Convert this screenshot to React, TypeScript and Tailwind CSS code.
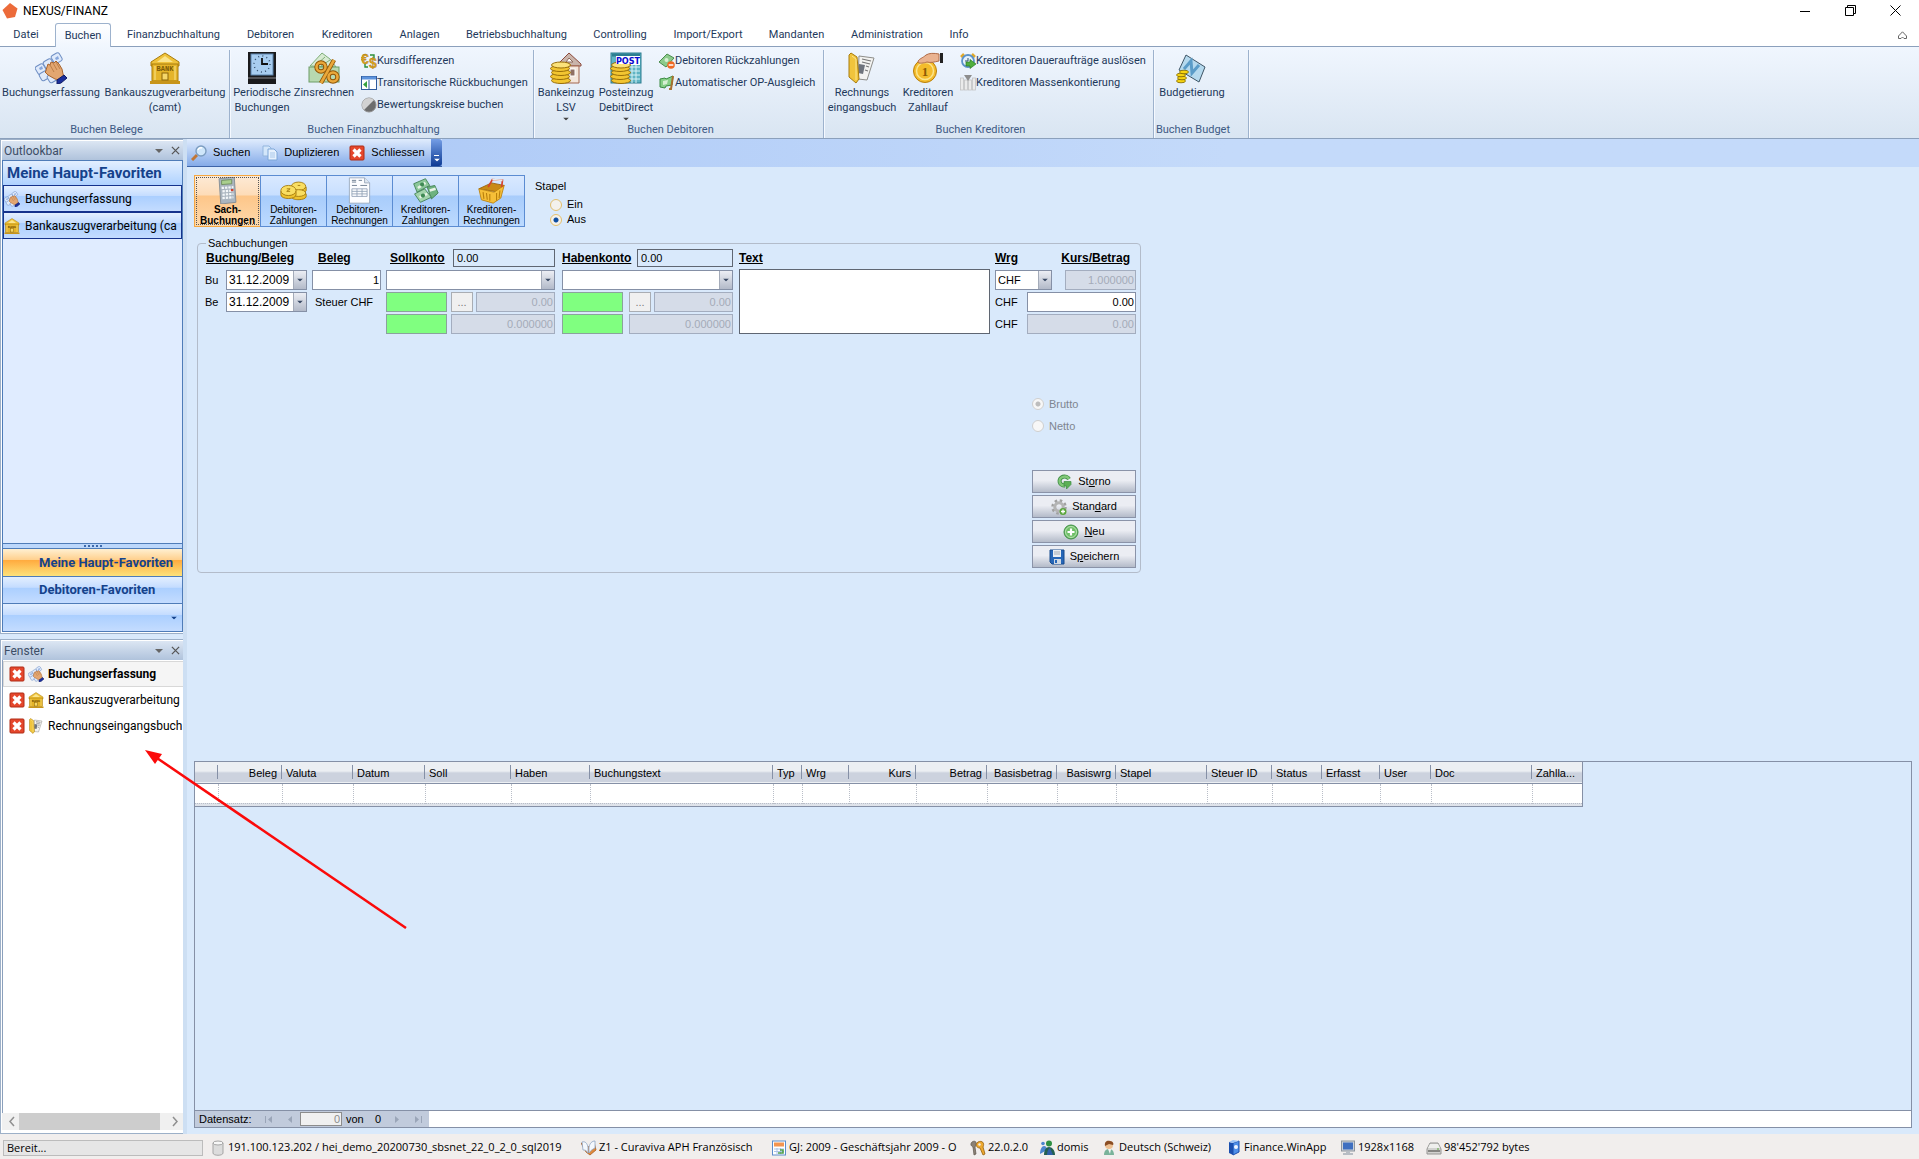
import type { ReactNode } from 'react'
import clsx from 'clsx'

const UI = "font-['Roboto','Noto_Sans',sans-serif]"
const FORM = "font-['Liberation_Sans',Arial,sans-serif]"

/* ---------- icons ---------- */

function Svg({ box = 32, size = 'size-8', children }: { box?: number; size?: string; children: ReactNode }) {
  return (
    <svg viewBox={`0 0 ${box} ${box}`} className={clsx('shrink-0', size)} aria-hidden="true" fill="none">
      {children}
    </svg>
  )
}

function HandIcon({ size }: { size?: string }) {
  return (
    <Svg size={size}>
      <g stroke="#6f8fc4" fill="#dfeafb">
        <rect x="1" y="13" width="9" height="9" rx="2" transform="rotate(-30 5 17)" />
        <rect x="9" y="8" width="9" height="9" rx="2" transform="rotate(-30 13 12)" />
        <rect x="17" y="2" width="9" height="9" rx="2" transform="rotate(-30 21 6)" />
        <rect x="5" y="20" width="9" height="8" rx="2" transform="rotate(-30 9 24)" />
        <rect x="13" y="22" width="9" height="8" rx="2" transform="rotate(-30 17 26)" />
      </g>
      <path d="M4 16l3-2 1 3-3 1zM20 6l3-2 1 3-3 1z" fill="#86a6dc" />
      <path d="M11 18l2-6 2 1 1-3 3 1 2-2 3 3 3 5 1 5 1 2-5 4-4-1-7-4-3-3 1-1z" fill="#e3a670" stroke="#a9652f" />
      <path d="M15 13l4 7M18 11l4 7M21 10l4 7" stroke="#b87a45" strokeWidth=".9" />
      <path d="M22 28l7-5 3 3-6 5-4 1z" fill="#1b2f9c" stroke="#101c66" />
    </Svg>
  )
}

function BankIcon({ size }: { size?: string }) {
  return (
    <Svg size={size}>
      <path d="M16 1l14 9v4H2v-4z" fill="#efc23a" stroke="#a97c0c" />
      <path d="M16 4l8 6H8z" fill="#fbe58c" />
      <rect x="3" y="12" width="26" height="17" fill="#e5b429" stroke="#a97c0c" />
      <rect x="1" y="29" width="30" height="3" fill="#c8951a" />
      <text x="16" y="19" textAnchor="middle" fontSize="7" fontWeight="bold" fill="#7c5a06" fontFamily="Liberation Mono, monospace">BANK</text>
      <rect x="13" y="21" width="6" height="7" fill="#f6d76a" stroke="#8b6508" />
      <path d="M6 14v14M26 14v14" stroke="#fbe58c" />
    </Svg>
  )
}

function ClockIcon() {
  return (
    <Svg>
      <rect x="2" width="28" height="32" fill="#1a1a1c" />
      <rect x="5" y="2" width="22" height="21" fill="#a8cdf0" stroke="#5d84ad" />
      <circle cx="16" cy="12" r="8" stroke="#37526f" strokeWidth="1.5" strokeDasharray="1 3.2" />
      <path d="M16 6v6h6" stroke="#111" strokeWidth="1.8" />
      <path d="M2 26h28" stroke="#8a8a8e" />
    </Svg>
  )
}

function PercentIcon() {
  return (
    <Svg>
      <path d="M2 14L14 1l8 6 6 8z" fill="#d7ead2" stroke="#7fae79" />
      <path d="M8 13l9-8M13 14l9-6" stroke="#7fae79" />
      <rect x="1" y="15" width="30" height="15" fill="#b7d9b0" stroke="#6d9c66" />
      <g stroke="#8e5406" strokeWidth="4.4">
        <circle cx="13" cy="15" r="4.5" />
        <circle cx="25" cy="25" r="4.5" />
        <path d="M26 8L13 31" />
      </g>
      <g stroke="#eaa83a" strokeWidth="2.6">
        <circle cx="13" cy="15" r="4.5" />
        <circle cx="25" cy="25" r="4.5" />
        <path d="M26 8L13 31" />
      </g>
    </Svg>
  )
}

function Coins() {
  return (
    <g fill="#f2c531" stroke="#9a6f08">
      <ellipse cx="11" cy="28.500" rx="9.500" ry="3" />
      <ellipse cx="10" cy="24.500" rx="9.500" ry="3" />
      <ellipse cx="11" cy="20.500" rx="9.500" ry="3" />
      <ellipse cx="10" cy="16.500" rx="9.500" ry="3" />
      <ellipse cx="11" cy="13" rx="9.500" ry="3" fill="#fbe27a" />
    </g>
  )
}

function HouseCoinsIcon() {
  return (
    <Svg>
      <path d="M8 12L19 1l12 11v2H8z" fill="#c9b4ab" stroke="#8d4a3c" />
      <path d="M10 14h19v17H10z" fill="#f3e6dc" stroke="#a3674f" />
      <path d="M16 10l3-4 4 4z" fill="#fff" stroke="#8d6a5c" />
      <rect x="20" y="17" width="5" height="7" fill="#8f6f63" stroke="#fff" />
      <Coins />
    </Svg>
  )
}

function PostIcon() {
  return (
    <Svg>
      <rect x="1" y="1" width="30" height="30" fill="#5fb4c4" stroke="#2c7d90" />
      <path d="M2 3h28" stroke="#2c7d90" strokeWidth="3" />
      <path d="M14 15h16M14 19h16M14 23h16M14 27h16M18 13v18M22 13v18M26 13v18" stroke="#d7f1f5" />
      <rect x="6" y="4" width="24" height="9" fill="#fff" />
      <Coins />
      <rect x="6" y="4" width="24" height="8" fill="#fff" />
      <text x="18" y="12" textAnchor="middle" fontSize="9" fontWeight="bold" fill="#0a0ad0" fontFamily="DejaVu Sans Condensed, sans-serif">POST</text>
    </Svg>
  )
}

function FolderIcon({ size }: { size?: string }) {
  return (
    <Svg size={size}>
      <path d="M13 4l15 2-7 22-9-1z" fill="#f3f3f1" stroke="#8e8e8a" />
      <path d="M16 7l9 2M16 10l8 2M20 14l3 1M19 18l3 1" stroke="#777" strokeWidth="1.2" />
      <path d="M13 12l6 1-2 9-5-1z" fill="#6f747d" />
      <path d="M3 3l2-2 6 4 2 22-3 4-7-6z" fill="#f0c43c" stroke="#a97c0c" />
      <path d="M6 4l4 3v21" stroke="#fbe58c" />
    </Svg>
  )
}

function PayCoinIcon() {
  return (
    <Svg>
      <circle cx="13" cy="19" r="11.500" fill="#f4bc2c" stroke="#b97f0b" />
      <circle cx="13" cy="19" r="8.500" stroke="#fbe58c" strokeWidth="1.500" />
      <text x="13" y="24" textAnchor="middle" fontSize="13" fontWeight="bold" fill="#8b5a04" fontFamily="Liberation Serif, serif">1</text>
      <path d="M6 10c0-3 5-4 8-7 3-2 8-2 13-1v7c-5 1-8 2-12 1-3 1-8 2-9 0z" fill="#eab391" stroke="#b06c48" />
      <rect x="28" y="1" width="3" height="10" fill="#222" />
    </Svg>
  )
}

function BudgetIcon() {
  return (
    <Svg>
      <path d="M10 3l19 12-6 15L3 18z" fill="#b5d9ee" stroke="#3e5566" />
      <path d="M8 17l7-8 1 12 7-8" stroke="#5b9cc8" strokeWidth="3" />
      <g fill="#f6d311" stroke="#7b6500" strokeWidth=".8">
        <ellipse cx="5" cy="29" rx="4.500" ry="1.800" />
        <ellipse cx="6" cy="26" rx="4.500" ry="1.800" />
        <ellipse cx="5" cy="23" rx="4.500" ry="1.800" />
        <ellipse cx="8" cy="20" rx="4.500" ry="1.800" />
      </g>
    </Svg>
  )
}

function S({ children }: { children: ReactNode }) {
  return <Svg box={16} size="size-4">{children}</Svg>
}

const CurrencyIcon = () => (
  <S>
    <text x="0" y="11" fontSize="14" fontWeight="bold" fill="#dba21c" stroke="#9a6f08" strokeWidth=".3" fontFamily="Liberation Sans, sans-serif">€</text>
    <text x="8" y="15" fontSize="14" fontWeight="bold" fill="#dba21c" stroke="#9a6f08" strokeWidth=".3" fontFamily="Liberation Sans, sans-serif">$</text>
    <path d="M9 2h4v3M7 14H4v-3" stroke="#2d8f3a" strokeWidth="1.400" />
  </S>
)
const TransitIcon = () => (
  <S>
    <rect x=".5" y="1.500" width="15" height="13" fill="#fff" stroke="#2f5b9c" />
    <path d="M1 3h14" stroke="#5c93dd" strokeWidth="3" />
    <path d="M8 5v10" stroke="#2f5b9c" />
    <path d="M6 6v7L2 9.500z" fill="#37a03f" />
  </S>
)
const SphereIcon = () => (
  <S>
    <circle cx="8" cy="8" r="7" fill="#6d6d6d" stroke="#8f8f8f" />
    <path d="M13 3L3 13A7 7 0 0 1 13 3z" fill="#d2d2d2" />
  </S>
)
const RefundIcon = () => (
  <S>
    <path d="M0 9l8-8 7 4-8 9z" fill="#8ccb8b" stroke="#4b8d4d" />
    <circle cx="7.500" cy="7" r="2" fill="#d6efd2" />
    <circle cx="12" cy="12" r="3.800" fill="#ef6a25" />
    <path d="M9.700 12h4.600" stroke="#fff" strokeWidth="1.500" />
  </S>
)
const BalanceIcon = () => (
  <S>
    <path d="M1 4l5-1 1 1 7-3-1 9-6 1-1 2-5-1z" fill="#86cf86" stroke="#3b8a42" />
    <path d="M14 1l-2 13h-2" stroke="#a8702e" strokeWidth="2" />
    <path d="M4 6l5-1-1 4-4 1z" fill="#d6efd2" />
  </S>
)
const AlarmIcon = () => (
  <S>
    <path d="M1 4l3-3M15 4l-3-3" stroke="#e0a92c" strokeWidth="2.500" />
    <circle cx="8" cy="8" r="6" fill="#e4f0fb" stroke="#5b92c9" strokeWidth="1.800" />
    <path d="M8 5v3H5" stroke="#33536f" />
    <path d="M6 9h4V6.500l6 4.500-6 4.500V13H6z" fill="#4fae3d" stroke="#2d7d22" strokeWidth=".7" />
  </S>
)
const ColumnsIcon = () => (
  <S>
    <g fill="#ebebeb" stroke="#c2c2c2" strokeWidth=".8">
      <rect x="0.500" y="3" width="3" height="12" />
      <rect x="4.500" y="5" width="3" height="10" />
      <rect x="8.500" y="5" width="3" height="10" />
      <rect x="12.500" y="3" width="3" height="12" />
    </g>
    <path d="M4 0h8L8 6z" fill="#8d8d8d" />
  </S>
)
const SearchIcon = () => (
  <S>
    <path d="M1 15l5-5" stroke="#c07636" strokeWidth="3" />
    <circle cx="10" cy="6" r="5" fill="#cfe6fa" stroke="#7c9dc0" strokeWidth="1.400" />
    <path d="M7 5a3 3 0 0 1 4-2" stroke="#fff" strokeWidth="1.400" />
  </S>
)
const CopyIcon = () => (
  <S>
    <path d="M1 1h6l2 2v8H1z" fill="#d3e6fa" stroke="#93b5dd" />
    <path d="M6 4h6l3 3v8H6z" fill="#e6f1fd" stroke="#7da6d8" />
    <path d="M8 8h5M8 10h5M8 12h5" stroke="#a9c8ea" />
  </S>
)
const CloseRedIcon = () => (
  <S>
    <rect x="1" y="1" width="14" height="14" rx="1" fill="#e5472c" stroke="#b02c16" />
    <path d="M4.500 4.500l7 7M11.500 4.500l-7 7" stroke="#fff" strokeWidth="3.200" />
  </S>
)
const UndoIcon = () => (
  <S>
    <path d="M12 5A5 4.500 0 1 0 8 11.500" stroke="#3c8c42" strokeWidth="4" />
    <path d="M12 5A5 4.500 0 1 0 8 11.500" stroke="#82c878" strokeWidth="2.400" />
    <path d="M7 7.500h7v3L9.500 15v-3H7z" fill="#5cb055" stroke="#3c8c42" strokeWidth=".7" />
  </S>
)
const GearIcon = () => (
  <S>
    <circle cx="8" cy="8" r="6.500" stroke="#a0a0a0" strokeWidth="2.500" strokeDasharray="2.500 2.600" />
    <circle cx="8" cy="8" r="4.200" stroke="#b4b4b4" strokeWidth="3" />
    <circle cx="12" cy="12.500" r="3.500" fill="#5aa63c" />
    <path d="M12 10.500v4M10 12.500h4" stroke="#fff" strokeWidth="1.300" />
  </S>
)
const PlusIcon = () => (
  <S>
    <circle cx="8" cy="8" r="7" fill="#6fbf68" stroke="#3f8f45" />
    <circle cx="8" cy="8" r="5.500" stroke="#b9e3b2" />
    <path d="M8 4.500v7M4.500 8h7" stroke="#fff" strokeWidth="2.200" />
  </S>
)
const SaveIcon = () => (
  <S>
    <path d="M1 1h14v14H3l-2-2z" fill="#2667b8" stroke="#174a8c" />
    <rect x="4" y="1" width="8" height="7" fill="#e9eef3" />
    <path d="M5 3h6M5 5h6" stroke="#a3abb5" />
    <rect x="5" y="10" width="7" height="5" fill="#cfd8e2" />
    <rect x="6" y="11" width="2" height="3" fill="#2667b8" />
  </S>
)
const DbIcon = () => (
  <S>
    <path d="M3 3v10c0 3 10 3 10 0V3z" fill="#dcdcdc" stroke="#a5a5a5" />
    <ellipse cx="8" cy="3" rx="5" ry="2" fill="#f7f7f7" stroke="#a5a5a5" />
  </S>
)
const BookIcon = () => (
  <S>
    <path d="M0 3l5 9 4 3 6-5-2-8-5 5z" fill="#e08a3c" stroke="#a85e22" strokeWidth=".8" />
    <path d="M1 2c3-1 5 1 6 5v6c-2-3-3-3-5-3zM14 1c-3 0-5 2-6 6v6c2-3 4-4 6-5z" fill="#f4f8fd" stroke="#8da3c4" strokeWidth=".8" />
  </S>
)
const CalendarIcon = () => (
  <S>
    <rect x="1.500" y="1" width="13" height="14" fill="#fff" stroke="#5b8ccc" />
    <rect x="3" y="2.500" width="10" height="4" fill="#f39450" />
    <path d="M3 9h10M3 11.500h10M6 8v6M9.500 8v6" stroke="#a9c3e6" />
    <path d="M9 10h3v3H7" stroke="#4fa04b" strokeWidth="1.600" />
  </S>
)
const KeyIcon = () => (
  <S>
    <path d="M2 2c3-2 5 0 4 3L5 7l1 7-2 1-1-8C1 6 0 4 2 2z" fill="#8b8176" stroke="#5c544b" strokeWidth=".7" />
    <path d="M8 2c4-2 7 1 5 5l2 7-2 1-3-7C6 8 5 4 8 2z" fill="#eea92f" stroke="#96600c" strokeWidth=".8" />
    <circle cx="9.500" cy="4.500" r="1.200" fill="#f1eeed" />
  </S>
)
const UsersIcon = () => (
  <S>
    <circle cx="4" cy="3.500" r="1.800" fill="#4c86cf" />
    <path d="M1 14c0-5 2-8 4-8s3 2 3 4z" fill="#4c86cf" />
    <circle cx="10" cy="3.500" r="3" fill="#2f8f43" />
    <path d="M5 15c0-5 2-8 5-8s6 3 6 8z" fill="#24614f" />
    <path d="M8 15c0-3 1-6 3-7l3 7z" fill="#2e5fa8" />
  </S>
)
const PersonIcon = () => (
  <S>
    <circle cx="8" cy="5" r="4" fill="#edbf91" />
    <path d="M4 6C3 1 7 0 9 1c3 0 4 3 3 4L8 4z" fill="#8a4d24" />
    <path d="M3 15c0-4 2-6 5-6s5 2 5 6z" fill="#79b39a" />
    <path d="M7 9h3l-1 5z" fill="#f6f6f6" />
  </S>
)
const AppIcon = () => (
  <S>
    <path d="M3 2l4 1v12l-4-2z" fill="#1b4fae" />
    <path d="M7 3l6-2v11l-6 3z" fill="#4f8fe8" stroke="#1b4fae" />
    <circle cx="10" cy="7" r="2" fill="#f0f6ff" />
    <path d="M3 2l4-2 6 1-6 2z" fill="#9cc3f6" />
  </S>
)
const MonitorIcon = () => (
  <S>
    <rect x="1.500" y="1" width="13" height="10" fill="#ccd2d9" stroke="#8d959e" />
    <rect x="3" y="2.500" width="10" height="7" fill="#3f6fc0" />
    <path d="M6 11h4v2h3v2H3v-2h3z" fill="#b7bdc4" />
  </S>
)
const PrinterIcon = () => (
  <S>
    <path d="M4 3h8l3 6v5H1V9z" fill="#d2d2d0" stroke="#959593" />
    <path d="M4 4h8l2 4H2z" fill="#efefed" />
    <path d="M2 11h12" stroke="#6c6c6a" strokeWidth="1.500" />
    <path d="M11 9h2" stroke="#5aa63c" />
  </S>
)

function CalculatorIcon() {
  return (
    <Svg>
      <path d="M6 2l18-2 2 30-18 2z" fill="#aab5bf" stroke="#7c8791" />
      <path d="M9 4l12-1v5L9 9z" fill="#a9cf8d" stroke="#6c8a59" />
      <g stroke="#f4f7f9" strokeWidth="2.600" strokeDasharray="2.800 1.200">
        <path d="M9 13l14-1M10 17l13-1M10 21l13-1M10 25l13-1" />
      </g>
      <path d="M20 15.500h3" stroke="#d2412e" strokeWidth="2.500" />
    </Svg>
  )
}
function GoldIcon() {
  return (
    <Svg>
      <g fill="#eec22e" stroke="#9f7409">
        <path d="M14 12v4c0 4 17 4 17 0v-4z" />
        <ellipse cx="22" cy="11" rx="8.500" ry="5" fill="#f9de62" />
        <path d="M14 21v3c0 4 17 4 17-1v-3z" />
        <ellipse cx="22" cy="19" rx="8.500" ry="4" fill="#f9de62" />
        <path d="M1 17v4c0 6 18 6 18 0v-4z" />
        <ellipse cx="10" cy="16" rx="9" ry="6" fill="#f9de62" />
      </g>
      <path d="M8 14h4l-4 3h4M21 10h3" stroke="#9f7409" />
    </Svg>
  )
}
function InvoiceIcon() {
  return (
    <Svg>
      <path d="M4 1h18l6 6v24H4z" fill="#fcfdff" stroke="#94a4b8" />
      <path d="M22 1v6h6" fill="#dfe7f0" stroke="#94a4b8" />
      <path d="M7 4h5M7 6h5M15 4h4M7 10h6M17 10h8" stroke="#5f7186" />
      <path d="M7 14h18v9H7zM7 17h18M7 20h18M13 14v9M19 14v9" stroke="#8fa0b5" />
    </Svg>
  )
}
function CashIcon() {
  return (
    <Svg>
      <path d="M2 8l14-6 5 8L6 18z" fill="#8cc79a" stroke="#3b7d4d" />
      <path d="M18 12l9-2 4 9-8 7z" fill="#6eb27f" stroke="#3b7d4d" />
      <path d="M3 20l12-6 8 10-13 6z" fill="#a3d4ac" stroke="#3b7d4d" />
      <path d="M7 13l9-6M9 24l9-4M21 16l7-2" stroke="#e8f3e6" strokeWidth="3" />
      <circle cx="12" cy="9" r="2.500" fill="#3f8a54" />
      <circle cx="13" cy="22" r="2.500" fill="#3f8a54" />
    </Svg>
  )
}
function BasketIcon() {
  return (
    <Svg>
      <path d="M1 14l15-7 15 3-6 8z" fill="#c98a14" stroke="#96600c" />
      <path d="M1 14l18 4 12-8-4 15-9 6-14-4z" fill="#f6bf38" stroke="#b97f0b" />
      <path d="M6 18l1 8M10 19l1 8M14 20v8M22 19v9M26 16l-1 9" stroke="#b97f0b" strokeWidth="1.300" />
      <path d="M12 12l5-9 12 1-1 8" stroke="#d5442c" strokeWidth="2" />
      <path d="M17 3l12 1" stroke="#e8e8e8" strokeWidth="2" />
    </Svg>
  )
}

function Caret({ className }: { className?: string }) {
  return (
    <svg viewBox="0 0 8 4" className={clsx('h-1 w-2 shrink-0', className)} aria-hidden="true">
      <path d="M0 0h8L4 4z" fill="currentColor" />
    </svg>
  )
}

/* ---------- ribbon ---------- */

const menus = [
  ['Datei', 'w-[52px]'],
  ['Buchen', 'w-[62px]'],
  ['Finanzbuchhaltung', 'w-[119px]'],
  ['Debitoren', 'w-[75px]'],
  ['Kreditoren', 'w-[78px]'],
  ['Anlagen', 'w-[67px]'],
  ['Betriebsbuchhaltung', 'w-[127px]'],
  ['Controlling', 'w-[80px]'],
  ['Import/Export', 'w-[96px]'],
  ['Mandanten', 'w-[81px]'],
  ['Administration', 'w-[100px]'],
  ['Info', 'w-[44px]'],
]

function BigButton({ icon, lines, width, drop }: { icon: ReactNode; lines: string[]; width: string; drop?: boolean }) {
  return (
    <button type="button" className={clsx('flex shrink-0 flex-col items-center pt-0.5 whitespace-nowrap', width)}>
      {icon}
      {lines.map(l => <span key={l} className="leading-[15px] first-of-type:mt-px">{l}</span>)}
      {drop && <Caret className="mt-0.5 scale-75 text-[#444]" />}
    </button>
  )
}

function SmallButton({ icon, label }: { icon: ReactNode; label: string }) {
  return (
    <button type="button" className="flex h-[22px] items-center whitespace-nowrap">
      {icon}
      {label}
    </button>
  )
}

function RibbonGroup({ label, width, children }: { label: string; width: string; children: ReactNode }) {
  return (
    <section className={clsx('flex shrink-0 flex-col border-r border-[#9db2cd] shadow-[1px_0_0_#f5f9ff]', width)}>
      <div className="flex flex-1 items-start">{children}</div>
      <h2 className="h-4 pr-4 text-center leading-4 whitespace-nowrap text-[#3e5a84]">{label}</h2>
    </section>
  )
}

function Ribbon() {
  return (
    <div className="flex h-[92px] border-b border-[#8ba0bc] bg-linear-to-b from-[#f0f6fe] to-[#d9e5f2] pt-[3px] text-[11px] text-[#1e395b]">
      <RibbonGroup label="Buchen Belege" width="w-[230px]">
        <BigButton icon={<HandIcon />} lines={['Buchungserfassung']} width="w-[102px]" />
        <BigButton icon={<BankIcon />} lines={['Bankauszugverarbeitung', '(camt)']} width="w-[126px]" />
      </RibbonGroup>
      <RibbonGroup label="Buchen Finanzbuchhaltung" width="w-[304px]">
        <BigButton icon={<ClockIcon />} lines={['Periodische', 'Buchungen']} width="w-[64px]" />
        <BigButton icon={<PercentIcon />} lines={['Zinsrechnen']} width="w-[60px]" />
        <div className="flex flex-col pl-[7px]">
          <SmallButton icon={<CurrencyIcon />} label="Kursdifferenzen" />
          <SmallButton icon={<TransitIcon />} label="Transitorische Rückbuchungen" />
          <SmallButton icon={<SphereIcon />} label="Bewertungskreise buchen" />
        </div>
      </RibbonGroup>
      <RibbonGroup label="Buchen Debitoren" width="w-[290px]">
        <BigButton icon={<HouseCoinsIcon />} lines={['Bankeinzug', 'LSV']} width="w-[64px]" drop />
        <BigButton icon={<PostIcon />} lines={['Posteinzug', 'DebitDirect']} width="w-[56px]" drop />
        <div className="flex flex-col pl-[5px]">
          <SmallButton icon={<RefundIcon />} label="Debitoren Rückzahlungen" />
          <SmallButton icon={<BalanceIcon />} label="Automatischer OP-Ausgleich" />
        </div>
      </RibbonGroup>
      <RibbonGroup label="Buchen Kreditoren" width="w-[330px]">
        <BigButton icon={<FolderIcon />} lines={['Rechnungs', 'eingangsbuch']} width="w-[76px]" />
        <BigButton icon={<PayCoinIcon />} lines={['Kreditoren', 'Zahllauf']} width="w-[56px]" />
        <div className="flex flex-col pl-1">
          <SmallButton icon={<AlarmIcon />} label="Kreditoren Daueraufträge auslösen" />
          <SmallButton icon={<ColumnsIcon />} label="Kreditoren Massenkontierung" />
        </div>
      </RibbonGroup>
      <RibbonGroup label="Buchen Budget" width="w-[95px]">
        <BigButton icon={<BudgetIcon />} lines={['Budgetierung']} width="w-[76px]" />
      </RibbonGroup>
    </div>
  )
}

/* ---------- side bar ---------- */

function PanelHeader({ title }: { title: string }) {
  return (
    <div className="flex h-[19px] shrink-0 items-center bg-linear-to-b from-[#dce6f3] to-[#b0c3dc] pl-0.5 text-xs text-[#3d4e66]">
      <h2 className="flex-1">{title}</h2>
      <button type="button" aria-label="Menü" className="mr-2 text-[#666]"><Caret /></button>
      <button type="button" aria-label="Schliessen" className="mr-[3px] text-[#555]">
        <svg viewBox="0 0 10 10" className="size-[9px]"><path d="M1 1l8 8M9 1l-8 8" stroke="currentColor" strokeWidth="1.400" /></svg>
      </button>
    </div>
  )
}

const windows = [
  { label: 'Buchungserfassung', icon: <HandIcon size="size-4" />, active: true },
  { label: 'Bankauszugverarbeitung', icon: <BankIcon size="size-4" /> },
  { label: 'Rechnungseingangsbuch', icon: <FolderIcon size="size-4" /> },
]

const BLUE_BTN = 'bg-[linear-gradient(#e3efff,#c4dcff_40%,#abcfff_42%,#c4dcff)]'

function Sidebar() {
  return (
    <aside className="flex w-[183px] shrink-0 flex-col gap-[5px] text-xs">
      <div className="flex h-[495px] flex-col border border-r-0 border-[#9db0c8] bg-white p-px pr-0">
        <PanelHeader title="Outlookbar" />
        <div className="flex flex-1 flex-col border border-[#4f7cb8] bg-[#e0ecff]">
          <h3 className="h-6 bg-linear-to-b from-[#e3efff] to-[#afd2ff] pl-1 text-[15px] leading-6 font-bold text-[#15428b]">Meine Haupt-Favoriten</h3>
          <button type="button" className={clsx('flex h-[27px] items-center gap-[5px] overflow-hidden border border-[#16338c] whitespace-nowrap', BLUE_BTN)}>
            <HandIcon size="size-4" />Buchungserfassung
          </button>
          <button type="button" className={clsx('flex h-[27px] items-center gap-[5px] border border-[#16338c] pr-1 whitespace-nowrap', BLUE_BTN)}>
            <BankIcon size="size-4" /><span className="overflow-hidden">Bankauszugverarbeitung (camt)</span>
          </button>
          <div className="flex-1" />
          <div className="flex h-[6px] items-center justify-center gap-0.5 border-y border-[#4f7cb8] bg-[#bcd7fb]">
            {[0, 1, 2, 3, 4].map(i => <span key={i} className="size-0.5 bg-[#3d69ab]" />)}
          </div>
          <button type="button" className="h-[27px] bg-[linear-gradient(#fff0d2,#ffd08d_40%,#ffab3f_42%,#fee27a)] pl-9 text-left text-[13px] font-bold whitespace-nowrap text-[#15428b]">Meine Haupt-Favoriten</button>
          <button type="button" className={clsx('h-7 border-y border-[#4f7cb8] pl-9 text-left text-[13px] font-bold text-[#15428b]', BLUE_BTN)}>Debitoren-Favoriten</button>
          <button type="button" aria-label="Weitere Favoriten" className={clsx('flex h-[27px] items-center justify-end pr-1 text-[#15428b]', BLUE_BTN)}><Caret className="scale-75" /></button>
        </div>
      </div>
      <div className="flex flex-1 flex-col border border-r-0 border-[#9db0c8] bg-white p-px pr-0">
        <PanelHeader title="Fenster" />
        <ul className="flex-1 border-l border-[#8ba0bc] pt-px text-black">
          {windows.map(w => (
            <li
              key={w.label}
              className={clsx(
                'flex h-[26px] items-center border pl-[5px] whitespace-nowrap',
                w.active ? 'border-r-0 border-[#d8d8d8] bg-[#f5f5f5] font-bold' : 'border-transparent',
              )}
            >
              <button type="button" aria-label={`${w.label} schliessen`}><CloseRedIcon /></button>
              <a href="#" className="flex items-center gap-1 pl-[3px]">{w.icon}{w.label}</a>
            </li>
          ))}
        </ul>
        <div className="mb-0.5 flex h-[17px] items-center bg-[#f0f0f0] text-[#8f8f8f]">
          <svg viewBox="0 0 17 17" className="size-[17px]" fill="none"><path d="M12 4L8 8.500l4 4.500" stroke="currentColor" strokeWidth="1.500" /></svg>
          <div className="h-full flex-1 bg-[#cdcdcd]" />
          <svg viewBox="0 0 23 17" className="h-[17px] w-[23px]" fill="none"><path d="M13 4l4 4.500-4 4.500" stroke="currentColor" strokeWidth="1.500" /></svg>
        </div>
      </div>
    </aside>
  )
}

/* ---------- booking form ---------- */

function Drop() {
  return (
    <span className="flex w-[13px] shrink-0 items-center justify-center border-l border-[#a4abb9] bg-linear-to-b from-[#eceef4] to-[#b3bac9] text-[#3a4a66]">
      <Caret className="scale-75" />
    </span>
  )
}

function Combo({ label, width, options = [''] }: { label: string; width: string; options?: string[] }) {
  return (
    <div className={clsx('flex h-5 border border-[#8590a6] bg-white', width)}>
      <select aria-label={label} className="min-w-0 flex-1 appearance-none bg-transparent px-0.5 outline-none">
        {options.map(o => <option key={o}>{o}</option>)}
      </select>
      <Drop />
    </div>
  )
}

function DateBox({ label }: { label: string }) {
  return (
    <label className="flex h-5 items-center">
      <span className="w-[21px]">{label}</span>
      <span className="flex h-5 w-[81px] border border-[#8590a6] bg-white">
        <input defaultValue="31.12.2009" className="min-w-0 flex-1 pl-0.5 text-xs outline-none" />
        <Drop />
      </span>
    </label>
  )
}

function NumBox({ label, value, width, disabled }: { label: string; value: string; width: string; disabled?: boolean }) {
  return (
    <input
      aria-label={label}
      defaultValue={value}
      disabled={disabled}
      className={clsx(
        'h-5 border px-px text-right',
        disabled ? 'border-[#a3adbf] bg-[#d5dce8] text-[#a4abb8]' : 'border-[#8590a6] bg-white text-black',
        width,
      )}
    />
  )
}

function Green({ label }: { label: string }) {
  return <input aria-label={label} className="h-5 w-[61px] border border-[#8aa39c] bg-[#80ff80] px-1" />
}

function Head({ children }: { children: ReactNode }) {
  return <span className="text-xs leading-[17px] font-bold underline">{children}</span>
}

function Konto({ name, width, saldo, indent }: { name: string; width: string; saldo: string; indent?: string }) {
  return (
    <div className={clsx('flex flex-col gap-0.5', width)}>
      <div className={clsx('mb-px flex h-[18px] items-end justify-between', indent)}>
        <Head>{name}</Head>
        <input aria-label={`${name} Saldo`} readOnly defaultValue="0.00" className={clsx('h-[18px] border border-[#5f6672] bg-transparent px-[3px]', saldo)} />
      </div>
      <Combo label={name} width="w-full" />
      <div className="flex justify-between">
        <Green label={`${name} Steuer`} />
        <div className="flex gap-[3px]">
          <button type="button" disabled className="h-5 w-[22px] border border-[#a9adb3] bg-[#f0f0f0] leading-4 text-[#7c7c7c]">...</button>
          <NumBox label={`${name} Steuerbetrag`} value="0.00" width="w-[79px]" disabled />
        </div>
      </div>
      <div className="flex justify-between">
        <Green label={`${name} Satz`} />
        <NumBox label={`${name} Kurs`} value="0.000000" width="w-[104px]" disabled />
      </div>
    </div>
  )
}

function Radio({ name, label, checked, disabled }: { name: string; label: string; checked?: boolean; disabled?: boolean }) {
  return (
    <label className={clsx('flex items-center gap-[5px]', disabled && 'text-[#7e8590]')}>
      <input
        type="radio"
        name={name}
        defaultChecked={checked}
        disabled={disabled}
        className="size-3 appearance-none rounded-full border border-[#e2be6c] bg-[#f3f1ec] checked:bg-[radial-gradient(circle,#0c4da2_0_2px,#f3f1ec_3px)] disabled:border-[#cfcfcf] disabled:bg-[#f7f7f7] disabled:checked:bg-[radial-gradient(circle,#bdbdbd_0_2px,#f7f7f7_3px)]"
      />
      {label}
    </label>
  )
}

function Action({ icon, children }: { icon: ReactNode; children: ReactNode }) {
  return (
    <button type="button" className="flex h-[23px] w-[104px] items-center justify-center gap-[5px] border border-[#8a93a8] bg-[linear-gradient(#ebedf3,#ebedf3_45%,#b4bbc9)] text-black">
      {icon}
      <span>{children}</span>
    </button>
  )
}

const modes = [
  { icon: <CalculatorIcon />, lines: ['Sach-', 'Buchungen'], active: true },
  { icon: <GoldIcon />, lines: ['Debitoren-', 'Zahlungen'] },
  { icon: <InvoiceIcon />, lines: ['Debitoren-', 'Rechnungen'] },
  { icon: <CashIcon />, lines: ['Kreditoren-', 'Zahlungen'] },
  { icon: <BasketIcon />, lines: ['Kreditoren-', 'Rechnungen'] },
]

function BookingForm() {
  return (
    <fieldset className="mt-2.5 ml-[10px] w-fit rounded-[4px] border border-[#b3bcca] pr-1 pb-1 pl-[7px] text-[11px] text-black">
      <legend className="ml-px px-0.5 leading-3">Sachbuchungen</legend>
      <div className="flex items-start">
        <div className="flex w-[107px] flex-col gap-0.5">
          <div className="mb-px flex h-[18px] items-end pl-px"><Head>Buchung/Beleg</Head></div>
          <DateBox label="Bu" />
          <DateBox label="Be" />
        </div>
        <div className="flex w-[74px] flex-col gap-0.5">
          <div className="mb-px flex h-[18px] items-end pl-1.5"><Head>Beleg</Head></div>
          <NumBox label="Beleg" value="1" width="w-[69px]" />
          <span className="pl-[3px] leading-5 whitespace-nowrap">Steuer CHF</span>
        </div>
        <Konto name="Sollkonto" width="w-[169px]" saldo="w-[102px]" indent="pl-1" />
        <div className="w-[7px]" />
        <Konto name="Habenkonto" width="w-[171px]" saldo="w-[96px]" />
        <label className="ml-1.5 flex w-[256px] flex-col">
          <span className="mb-[2px] flex h-[18px] items-end"><Head>Text</Head></span>
          <textarea className="h-[65px] w-[251px] resize-none border border-[#5f6672] bg-white p-1" />
        </label>
        <div className="flex w-[141px] flex-col gap-0.5">
          <div className="mb-px flex h-[18px] items-end justify-between pr-1.5">
            <Head>Wrg</Head>
            <Head>Kurs/Betrag</Head>
          </div>
          <div className="flex justify-between">
            <Combo label="Währung" width="w-[57px]" options={['CHF', 'EUR', 'USD']} />
            <NumBox label="Kurs" value="1.000000" width="w-[71px]" disabled />
          </div>
          <div className="flex items-center justify-between">CHF<NumBox label="Betrag" value="0.00" width="w-[109px]" /></div>
          <div className="flex items-center justify-between">CHF<NumBox label="Basisbetrag" value="0.00" width="w-[109px]" disabled /></div>
        </div>
      </div>
      <div className="mt-[62px] ml-auto flex w-[104px] flex-col gap-0.5">
        <div className="mb-[34px] flex flex-col gap-[5px]">
          <Radio name="steuer" label="Brutto" checked disabled />
          <Radio name="steuer" label="Netto" disabled />
        </div>
        <Action icon={<UndoIcon />}>St<u>o</u>rno</Action>
        <Action icon={<GearIcon />}>Stan<u>d</u>ard</Action>
        <Action icon={<PlusIcon />}><u>N</u>eu</Action>
        <Action icon={<SaveIcon />}>S<u>p</u>eichern</Action>
      </div>
    </fieldset>
  )
}

/* ---------- bookings grid ---------- */

const columns = [
  { label: '', width: 'w-[23px]' },
  { label: 'Beleg', width: 'w-[64px]', right: true },
  { label: 'Valuta', width: 'w-[71px]' },
  { label: 'Datum', width: 'w-[72px]' },
  { label: 'Soll', width: 'w-[86px]' },
  { label: 'Haben', width: 'w-[79px]' },
  { label: 'Buchungstext', width: 'w-[183px]' },
  { label: 'Typ', width: 'w-[29px]' },
  { label: 'Wrg', width: 'w-[47px]' },
  { label: 'Kurs', width: 'w-[67px]', right: true },
  { label: 'Betrag', width: 'w-[71px]', right: true },
  { label: 'Basisbetrag', width: 'w-[70px]', right: true },
  { label: 'Basiswrg', width: 'w-[59px]', right: true },
  { label: 'Stapel', width: 'w-[91px]' },
  { label: 'Steuer ID', width: 'w-[65px]' },
  { label: 'Status', width: 'w-[50px]' },
  { label: 'Erfasst', width: 'w-[58px]' },
  { label: 'User', width: 'w-[51px]' },
  { label: 'Doc', width: 'w-[101px]' },
  { label: 'Zahlla...', width: 'w-[50px]' },
]

function NavButton({ d, label }: { d: string; label: string }) {
  return (
    <button type="button" disabled aria-label={label} className="text-[#9aa5b8]">
      <svg viewBox="0 0 9 9" className="size-[9px]"><path d={d} fill="currentColor" /></svg>
    </button>
  )
}

function BookingGrid() {
  return (
    <div className="mr-[7px] mb-1.5 ml-[7px] flex h-[367px] flex-col border border-[#8590a6] text-[11px] text-black">
      <table className="w-[1387px] table-fixed border-collapse border-r border-b border-[#8590a6]">
        <thead>
          <tr className="h-[21px] border-b border-[#8590a6] bg-[linear-gradient(#eceff3_45%,#ccd2de_55%)]">
            {columns.map((c, i) => (
              <th key={c.label} className={clsx('p-0 py-[3px] font-normal', c.width)}>
                <div
                  className={clsx(
                    'h-[14px] overflow-hidden pl-1 leading-[17px] whitespace-nowrap',
                    c.right ? 'pr-1 text-right' : 'text-left',
                    i < columns.length - 1 && 'border-r border-[#8590a6]',
                  )}
                >
                  {c.label}
                </div>
              </th>
            ))}
          </tr>
        </thead>
        <tbody>
          <tr className="h-5 border-b border-dotted border-[#b9bec8] bg-white">
            {columns.map(c => <td key={c.label} className="border-r border-dotted border-[#b9bec8] p-0" />)}
          </tr>
          <tr className="h-[3px] bg-[#dfe3ea]"><td colSpan={columns.length} className="p-0" /></tr>
        </tbody>
      </table>
      <div className="flex-1" />
      <div className="flex h-[17px] items-stretch border-t border-[#8590a6] bg-white">
        <div className="flex w-[234px] items-center bg-[#c1cbdc] pl-1">
          <span className="w-[66px]">Datensatz:</span>
          <div className="flex w-[35px] gap-3">
            <NavButton label="Erster" d="M0 1h1v7H0zM7 1v7L3 4.500z" />
            <NavButton label="Zurück" d="M6 1v7L2 4.500z" />
          </div>
          <input aria-label="Datensatz" disabled defaultValue="0" className="h-[14px] w-[42px] border border-[#8c8c8c] bg-[#f0f0f0] px-px text-right text-[#8c8c8c]" />
          <span className="w-[33px] pl-1">von</span>
          <span className="w-[18px]">0</span>
          <div className="flex gap-3">
            <NavButton label="Weiter" d="M2 1v7l4-3.500z" />
            <NavButton label="Letzter" d="M1 1v7l4-3.500zM7 1h1v7H7z" />
          </div>
        </div>
      </div>
    </div>
  )
}

/* ---------- status bar ---------- */

const status = [
  { icon: <DbIcon />, label: '191.100.123.202 / hei_demo_20200730_sbsnet_22_0_2_0_sql2019', width: 'w-[371px]' },
  { icon: <BookIcon />, label: 'Z1 - Curaviva APH Französisch', width: 'w-[190px]' },
  { icon: <CalendarIcon />, label: 'GJ: 2009 - Geschäftsjahr 2009 - O', width: 'w-[199px]' },
  { icon: <KeyIcon />, label: '22.0.2.0', width: 'w-[69px]' },
  { icon: <UsersIcon />, label: 'domis', width: 'w-[62px]' },
  { icon: <PersonIcon />, label: 'Deutsch (Schweiz)', width: 'w-[125px]' },
  { icon: <AppIcon />, label: 'Finance.WinApp', width: 'w-[114px]' },
  { icon: <MonitorIcon />, label: '1928x1168', width: 'w-[86px]' },
  { icon: <PrinterIcon />, label: "98'452'792 bytes", width: '' },
]

export default function App() {
  return (
    <div className={clsx('relative flex min-h-screen flex-col overflow-hidden bg-[#d9e9fb]', UI)}>
      <header className="bg-white">
        <div className="flex h-[23px] items-center pb-0.5 text-xs text-black">
          <svg viewBox="0 0 16 16" className="mr-[5px] ml-[2px] size-4" aria-hidden="true">
            <path d="M8 0l7.500 5.500-2.500 8.500-8 1.500L.5 7z" fill="#ec6b3a" />
          </svg>
          <h1 className="flex-1">NEXUS/FINANZ</h1>
          <button type="button" aria-label="Minimieren" className="flex w-[45px] justify-center"><svg viewBox="0 0 10 10" className="size-2.5"><path d="M0 5.500h10" stroke="#000" /></svg></button>
          <button type="button" aria-label="Wiederherstellen" className="flex w-[46px] justify-center"><svg viewBox="0 0 11 11" className="size-[11px]" fill="none"><path d="M.5 2.500h8v8h-8zM2.500 2.500v-2h8v8h-2" stroke="#000" /></svg></button>
          <button type="button" aria-label="Schliessen" className="flex w-[46px] justify-center pr-px"><svg viewBox="0 0 11 11" className="size-[11px]"><path d="M.5.5l10 10M10.500.5l-10 10" stroke="#000" /></svg></button>
        </div>
        <nav className="flex h-6 items-stretch border-b border-[#8ba0bc] text-[11px] text-[#1e395b]">
          {menus.map(([label, width]) => (
            <a
              key={label}
              href="#"
              className={clsx(
                'flex items-center justify-center pt-0.5',
                width,
                label === 'Buchen' && '-mb-px rounded-t-[3px] border border-b-0 border-[#9db2cd] bg-linear-to-b from-white to-[#f0f6fe]',
                label === 'Buchen' && 'mx-[3px] w-[56px]!',
              )}
            >
              {label}
            </a>
          ))}
          <button type="button" aria-label="Menüband minimieren" className="mr-3 ml-auto">
            <svg viewBox="0 0 9 8" className="h-2 w-[9px]" fill="none"><path d="M.5 5L4.500.8 8.500 5v2.500H6L4.500 6 3 7.500H.5z" stroke="#666" /></svg>
          </button>
        </nav>
        <Ribbon />
      </header>

      <main className="flex flex-1">
        <Sidebar />
        <div className={clsx('flex min-w-0 flex-1 flex-col border-l-[4px] border-[#cddff3]', FORM)}>
          <div className="h-7 bg-linear-to-r from-[#aac7f6] to-[#c4dafa] to-60% text-[11px] text-black">
            <div className="flex h-7 w-[255px] border-b border-[#3d64a8] bg-linear-to-b from-[#e0ecfd] to-[#85abe8]">
              <button type="button" className="flex items-center gap-1.5 pl-1"><SearchIcon />Suchen</button>
              <button type="button" className="flex items-center gap-1.5 pl-3"><CopyIcon />Duplizieren</button>
              <button type="button" className="flex items-center gap-1.5 pl-2.5"><CloseRedIcon />Schliessen</button>
              <button type="button" aria-label="Weitere" className="ml-auto flex w-[11px] flex-col items-center justify-end gap-0.5 rounded-r-[3px] bg-linear-to-b from-[#759ee6] to-[#0d3a94] pb-1 text-white">
                <span className="h-px w-[5px] bg-white" />
                <Caret className="scale-75" />
              </button>
            </div>
          </div>
          <div className="flex pt-2 pl-[7px]">
            <div className="flex text-[10px] text-black">
              {modes.map(m => (
                <button
                  key={m.lines.join('')}
                  type="button"
                  className={clsx(
                    '-mr-px flex h-[52px] w-[67px] flex-col items-center border pt-px',
                    m.active ? 'border-[#f5a742] bg-[linear-gradient(#fdead6,#fddcb8_38%,#fdc689_40%,#fed9ab)] font-bold outline-1 -outline-offset-3 outline-dotted outline-[#555]' : 'border-[#5b8cd2] bg-[linear-gradient(#d9e9ff,#c8dfff_38%,#a8ccfb_40%,#bcdaff)]',
                  )}
                >
                  <span className="block [&>svg]:size-[27px]">{m.icon}</span>
                  {m.lines.map(l => <span key={l} className="leading-[11px]">{l}</span>)}
                </button>
              ))}
            </div>
            <div role="radiogroup" aria-label="Stapel" className="pt-1 pl-[11px] text-[11px]">
              <div className="leading-[15px]">Stapel</div>
              <div className="flex flex-col pt-[3px] pl-[15px] leading-[15px]">
                <Radio name="stapel" label="Ein" />
                <Radio name="stapel" label="Aus" checked />
              </div>
            </div>
          </div>
          <BookingForm />
          <div className="min-h-4 flex-1" />
          <BookingGrid />
        </div>
      </main>

      <footer className="flex h-[25px] items-center bg-[#f1eeed] pt-0.5 font-['Open_Sans','Noto_Sans',sans-serif] text-[11px] whitespace-nowrap text-black">
        <div className="mr-[7px] ml-[3px] h-4 w-[200px] border border-[#bcbcbc] bg-[#e6e6e6] px-[3px] leading-[14px]">Bereit...</div>
        {status.map(s => (
          <div key={s.label} className={clsx('flex shrink-0 items-center gap-0.5', s.width)}>{s.icon}{s.label}</div>
        ))}
      </footer>

      {/* red pointer drawn over the window list */}
      <svg viewBox="0 0 264 182" className="pointer-events-none absolute top-[749px] left-[144px] h-[182px] w-[264px]" aria-hidden="true">
        <path d="M10 7l252 172" stroke="#fb0a0a" strokeWidth="2.500" />
        <path d="M1 1l17 4-7 10z" fill="#fb0a0a" />
      </svg>
    </div>
  )
}
